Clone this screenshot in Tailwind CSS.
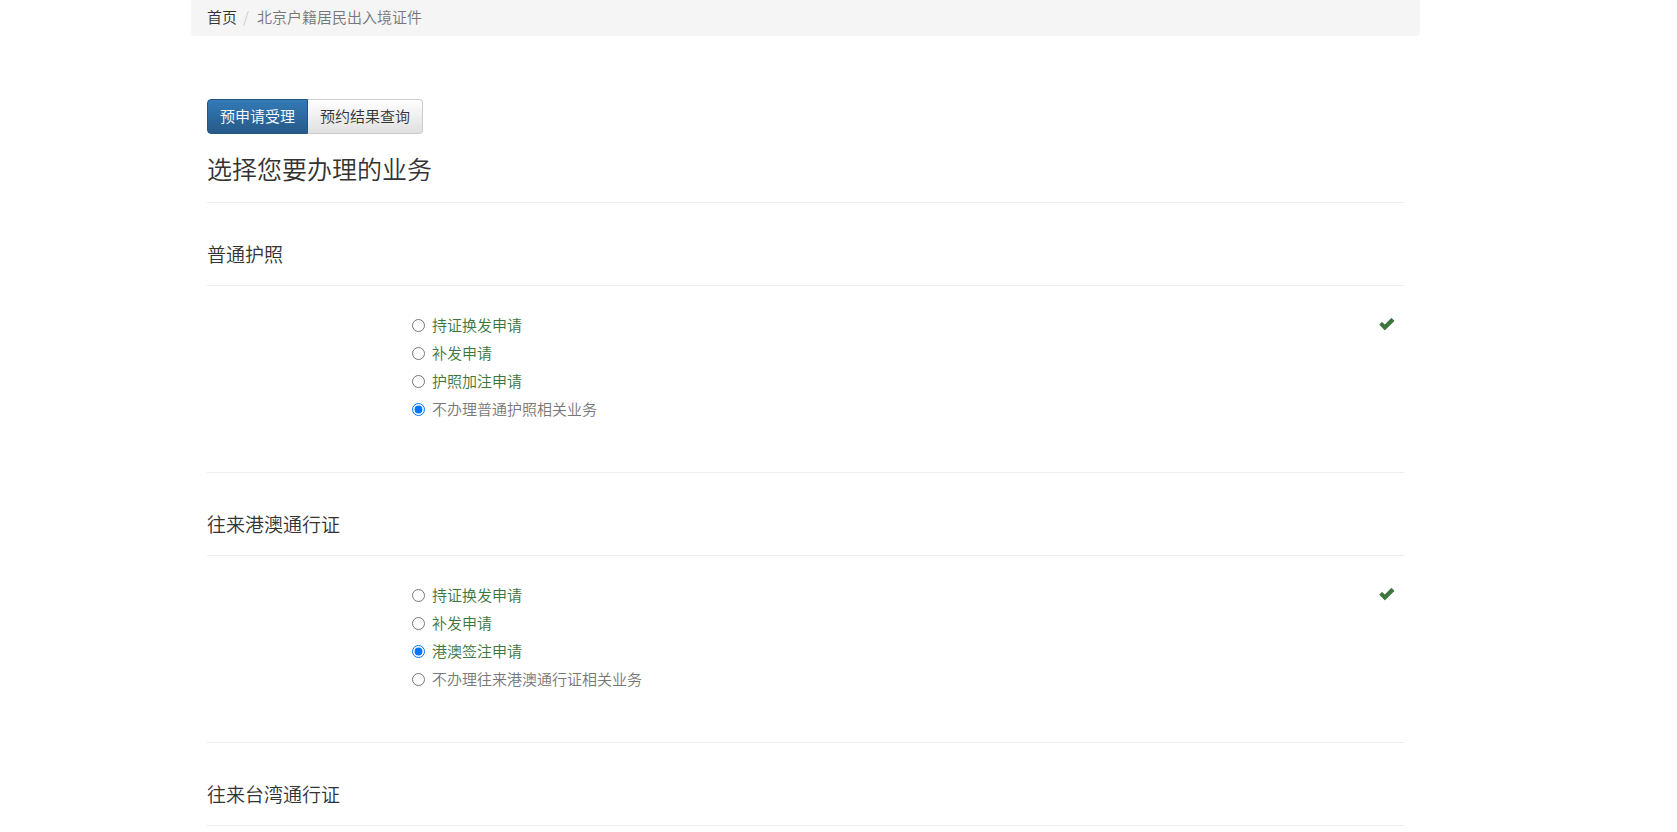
<!DOCTYPE html>
<html lang="zh-CN">
<head>
  <meta charset="UTF-8">
  <meta name="viewport" content="width=device-width, initial-scale=1.0">
  <title>北京户籍居民出入境证件</title>
  <script src="https://cdn.jsdelivr.net/npm/@tailwindcss/browser@4"></script>
</head>
<body class="bg-white pr-[66px] text-[15px] text-[#333] font-[350] font-['Noto_Sans_CJK_SC',sans-serif]">
  <div class="max-w-[1229px] mx-auto">
    <nav class="h-9 px-4 pb-[2px] flex items-center rounded-b bg-[#f5f5f5] leading-5">
      <a href="#">首页</a>
      <span class="px-[6px] text-[#ccc]">/</span>
      <span class="pl-[2px] text-[#777]">北京户籍居民出入境证件</span>
    </nav>

    <main class="px-4">
      <div class="flex mt-[63px]">
        <button type="button" class="h-[35px] px-3 rounded-l border border-[#245580] bg-linear-to-b from-[#337ab7] to-[#265a88] text-white">预申请受理</button>
        <button type="button" class="h-[35px] px-3 rounded-r border border-l-0 border-[#ccc] bg-linear-to-b from-white to-[#e0e0e0]">预约结果查询</button>
      </div>

      <h1 class="py-[19px] border-b border-[#eee] text-[25px] leading-[30px] font-[350]">选择您要办理的业务</h1>

      <section class="border-b border-[#eee]">
        <h2 class="pt-[39px] pb-[19px] border-b border-[#eee] text-[19px] leading-6 font-[350]">普通护照</h2>
        <div class="flex justify-between pt-[25px] pb-[49px] pl-[205px] pr-[9px]">
          <div class="text-[#3c763d]">
            <label class="flex items-center h-7"><input type="radio" name="passport" class="w-[13px] h-[13px] mr-[7px]">持证换发申请</label>
            <label class="flex items-center h-7"><input type="radio" name="passport" class="w-[13px] h-[13px] mr-[7px]">补发申请</label>
            <label class="flex items-center h-7"><input type="radio" name="passport" class="w-[13px] h-[13px] mr-[7px]">护照加注申请</label>
            <label class="flex items-center h-7 text-[#777]"><input type="radio" name="passport" class="w-[13px] h-[13px] mr-[7px]" checked>不办理普通护照相关业务</label>
          </div>
          <svg class="w-4 h-7" viewBox="0 0 16 28" fill="#3c763d" aria-hidden="true"><path d="M0.6 13.2 2.6 11.2Q3 10.8 3.4 11.2L5.8 13.4 12 7.2Q12.4 6.8 12.8 7.2L15.2 9.4Q15.6 9.8 15.2 10.2L6.2 19Q5.8 19.4 5.4 19L0.6 14Q0.2 13.6 0.6 13.2Z"/></svg>
        </div>
      </section>

      <section class="border-b border-[#eee]">
        <h2 class="pt-[39px] pb-[19px] border-b border-[#eee] text-[19px] leading-6 font-[350]">往来港澳通行证</h2>
        <div class="flex justify-between pt-[25px] pb-[49px] pl-[205px] pr-[9px]">
          <div class="text-[#3c763d]">
            <label class="flex items-center h-7"><input type="radio" name="hkmo" class="w-[13px] h-[13px] mr-[7px]">持证换发申请</label>
            <label class="flex items-center h-7"><input type="radio" name="hkmo" class="w-[13px] h-[13px] mr-[7px]">补发申请</label>
            <label class="flex items-center h-7"><input type="radio" name="hkmo" class="w-[13px] h-[13px] mr-[7px]" checked>港澳签注申请</label>
            <label class="flex items-center h-7 text-[#777]"><input type="radio" name="hkmo" class="w-[13px] h-[13px] mr-[7px]">不办理往来港澳通行证相关业务</label>
          </div>
          <svg class="w-4 h-7" viewBox="0 0 16 28" fill="#3c763d" aria-hidden="true"><path d="M0.6 13.2 2.6 11.2Q3 10.8 3.4 11.2L5.8 13.4 12 7.2Q12.4 6.8 12.8 7.2L15.2 9.4Q15.6 9.8 15.2 10.2L6.2 19Q5.8 19.4 5.4 19L0.6 14Q0.2 13.6 0.6 13.2Z"/></svg>
        </div>
      </section>

      <section>
        <h2 class="pt-[39px] pb-[19px] border-b border-[#eee] text-[19px] leading-6 font-[350]">往来台湾通行证</h2>
      </section>
    </main>
  </div>
</body>
</html>
